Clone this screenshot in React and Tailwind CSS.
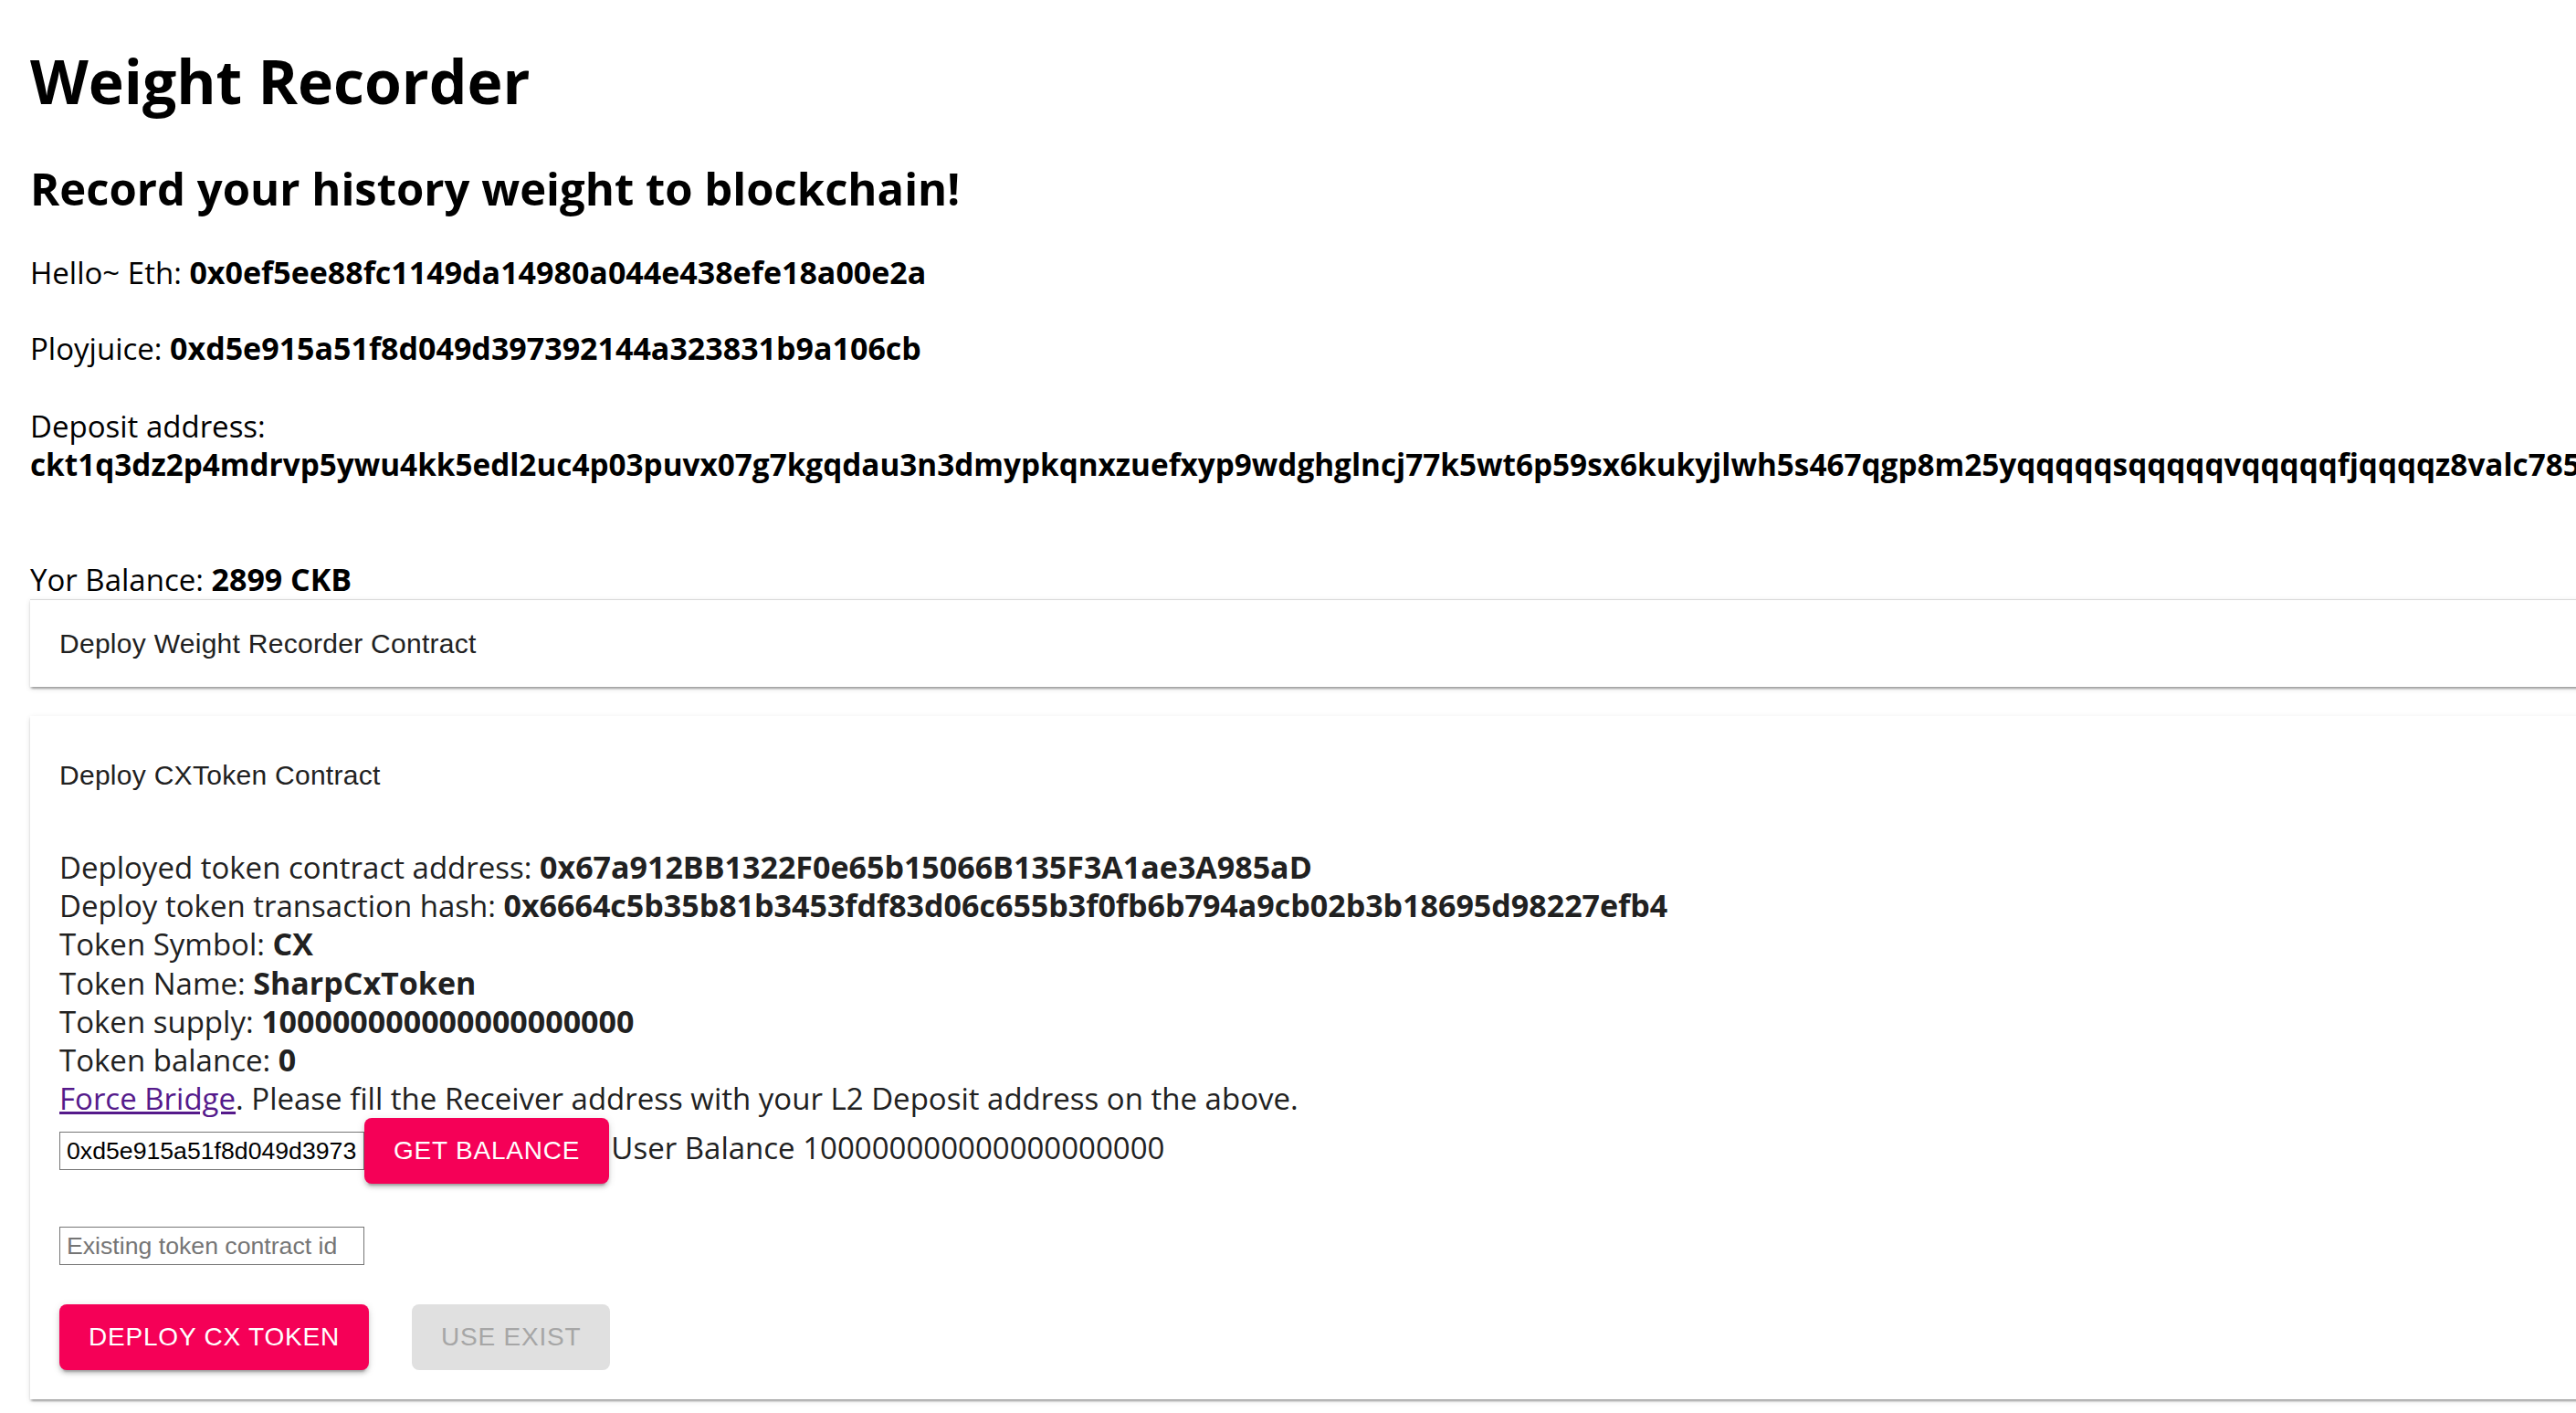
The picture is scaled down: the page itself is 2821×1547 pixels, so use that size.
import React from 'react';

const sans = "font-['Open_Sans',sans-serif]";
const arial = "font-['Liberation_Sans',Arial,sans-serif]";

const DEPOSIT =
  'ckt1q3dz2p4mdrvp5ywu4kk5edl2uc4p03puvx07g7kgqdau3n3dmypkqnxzuefxyp9wdghglncj77k5wt6p59sx6kukyjlwh5s467qgp8m25yqqqqqsqqqqqvqqqqqfjqqqqz8valc7852qqqqqqqq';

const primaryBtn = `flex h-[72px] items-center rounded-[8px] bg-[#f50057] px-[32px] text-[28px] font-medium tracking-[0.8px] text-white shadow-[0_6px_2px_-4px_rgba(0,0,0,0.2),0_4px_4px_0_rgba(0,0,0,0.14),0_2px_10px_0_rgba(0,0,0,0.12)] ${arial}`;
const panelShadow =
  'shadow-[0_4px_2px_-2px_rgba(0,0,0,0.2),0_2px_2px_0_rgba(0,0,0,0.14),0_2px_6px_0_rgba(0,0,0,0.12)]';
const boldVal = 'text-[34px] leading-none';

function Line({ label, value }) {
  return (
    <div>
      {label} <b className={boldVal}>{value}</b>
    </div>
  );
}

export default function App() {
  return (
    <div className={`h-screen w-full overflow-hidden bg-white text-black ${sans}`}>
      <div className="w-[3100px] pl-[33px] pt-[48px]">
        <h1 className="text-[66px] leading-[80px] font-bold">Weight Recorder</h1>
        <h2 className="mt-[48px] text-[49px] leading-[60px] font-bold">Record your history weight to blockchain!</h2>

        <div className="text-[33px] leading-[42px]">
          <p className="mt-[42px]">
            Hello~ Eth: <b className={boldVal}>0x0ef5ee88fc1149da14980a044e438efe18a00e2a</b>
          </p>
          <p className="mt-[41px]">
            Ployjuice: <b className={boldVal}>0xd5e915a51f8d049d397392144a323831b9a106cb</b>
          </p>
          <p className="mt-[43px]">
            Deposit address:
            <br />
            <b className="whitespace-nowrap text-[33.3px] leading-none">{DEPOSIT}</b>
          </p>
          <p className="mt-[84px]">
            Yor Balance: <b className={boldVal}>2899 CKB</b>
          </p>
        </div>

        {/* collapsed panel */}
        <div className={`w-[2900px] border-t border-[#d9d9d9] bg-white ${panelShadow}`}>
          <div className={`flex h-[95px] items-center px-[32px] text-[30px] leading-[45px] tracking-[0.28px] text-[#212121] ${arial}`}>
            Deploy Weight Recorder Contract
          </div>
        </div>

        {/* expanded panel */}
        <div className={`mt-[32px] w-[2900px] bg-white text-[#212121] ${panelShadow}`}>
          <div className={`flex h-[128px] items-center px-[32px] text-[30px] leading-[45px] tracking-[0.28px] ${arial}`}>
            Deploy CXToken Contract
          </div>
          <div className="px-[32px] pt-[17px] pb-[32px] text-[33px] leading-[42.2px]">
            <Line label="Deployed token contract address:" value="0x67a912BB1322F0e65b15066B135F3A1ae3A985aD" />
            <Line
              label="Deploy token transaction hash:"
              value="0x6664c5b35b81b3453fdf83d06c655b3f0fb6b794a9cb02b3b18695d98227efb4"
            />
            <Line label="Token Symbol:" value="CX" />
            <Line label="Token Name:" value="SharpCxToken" />
            <Line label="Token supply:" value="100000000000000000000" />
            <Line label="Token balance:" value="0" />
            <div>
              <a href="#" className="text-[#551a8b] underline">
                Force Bridge
              </a>
              . Please fill the Receiver address with your L2 Deposit address on the above.
            </div>

            <div className="flex items-baseline">
              <input
                defaultValue="0xd5e915a51f8d049d397392144a323831b9a106cb"
                className={`h-[42px] w-[334px] border border-[#767676] px-[7px] text-[26.67px] text-black outline-none ${arial}`}
              />
              <button className={primaryBtn}>GET BALANCE</button>
              <span className="ml-[2px]">User Balance 100000000000000000000</span>
            </div>

            <input
              placeholder="Existing token contract id"
              className={`mt-[47px] block h-[42px] w-[334px] border border-[#767676] px-[7px] text-[26.67px] text-black outline-none placeholder:text-[#757575] ${arial}`}
            />

            <div className="mt-[43px] flex">
              <button className={primaryBtn}>DEPLOY CX TOKEN</button>
              <button
                disabled
                className={`ml-[47px] flex h-[72px] items-center rounded-[8px] bg-[#e0e0e0] px-[32px] text-[28px] font-medium tracking-[0.8px] text-[#a6a6a6] ${arial}`}
              >
                USE EXIST
              </button>
            </div>
          </div>
        </div>
      </div>
    </div>
  );
}
